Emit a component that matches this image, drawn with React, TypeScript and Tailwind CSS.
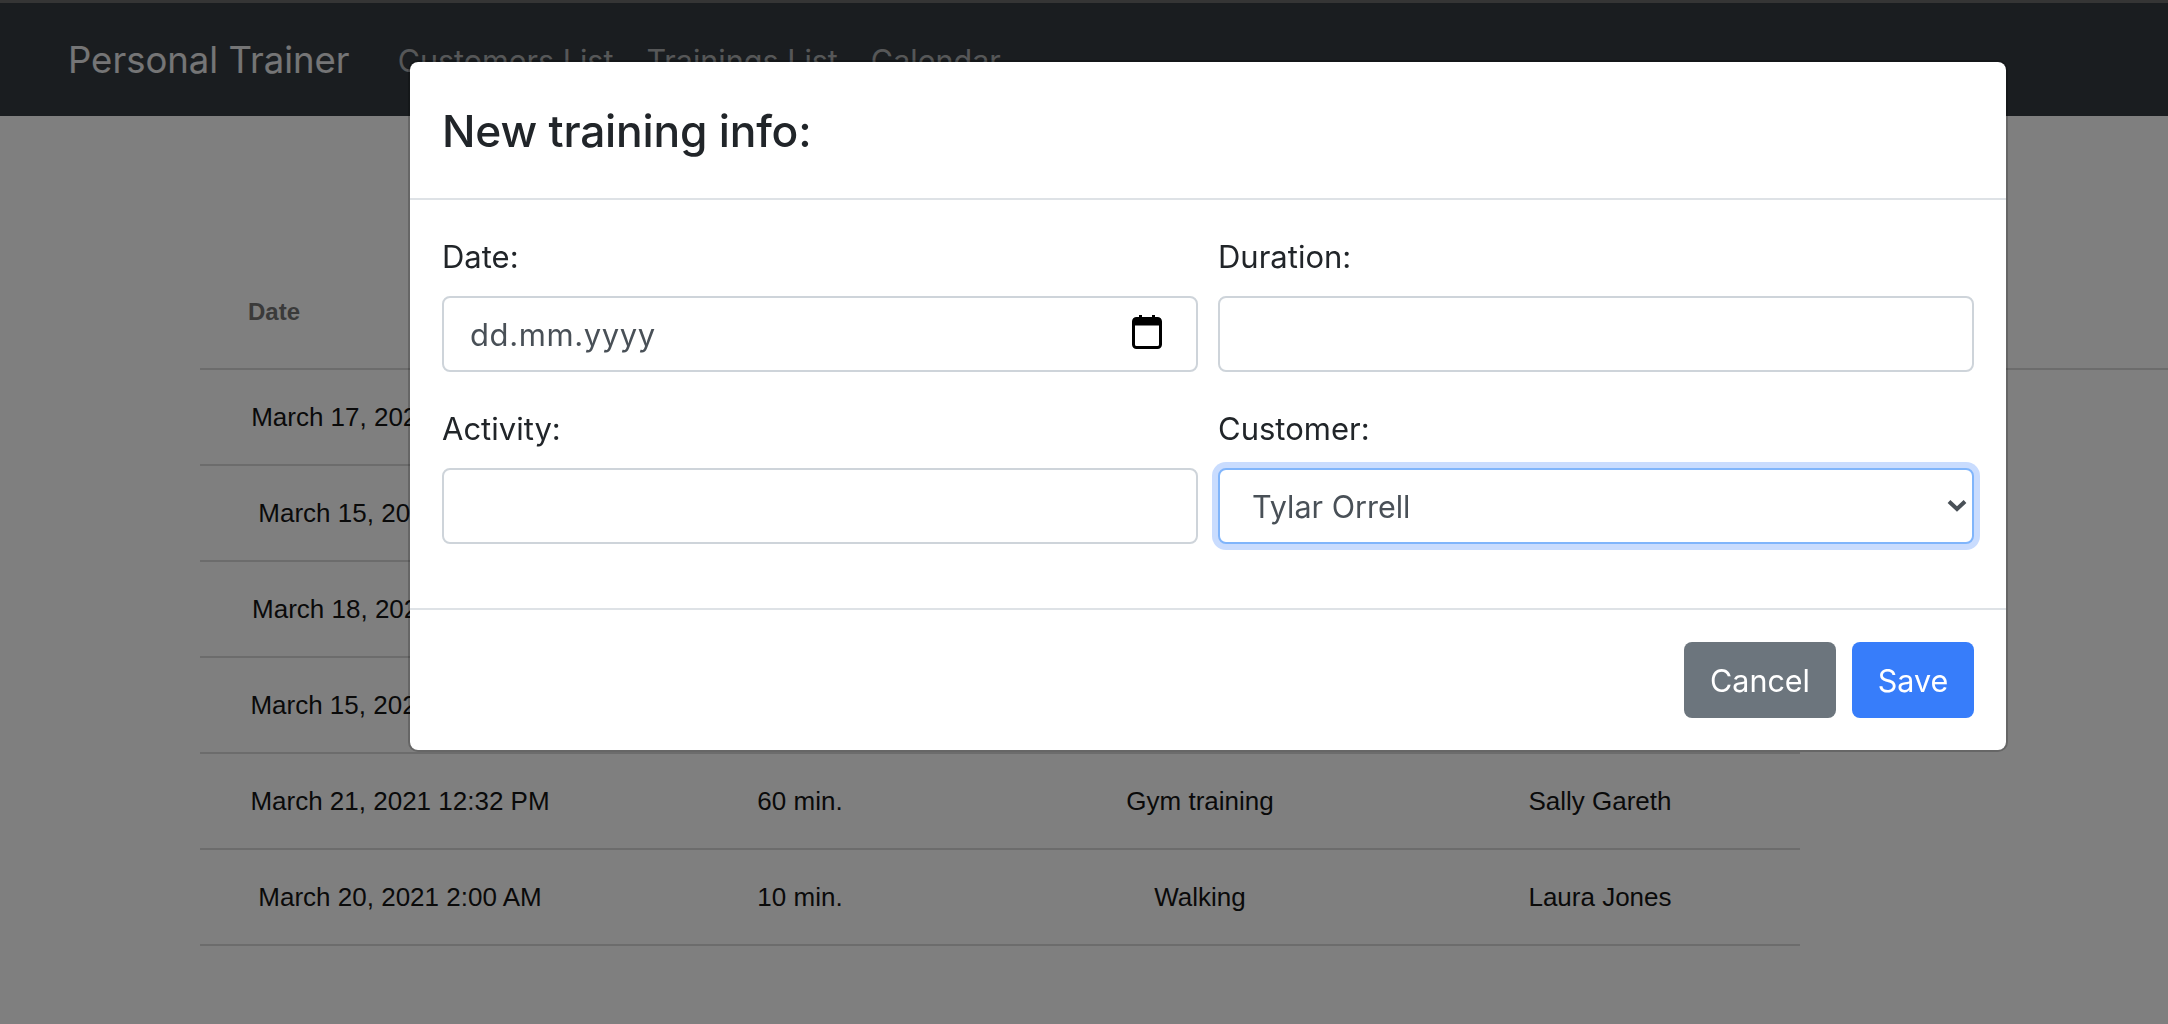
const trainings = [
  { date: "March 17, 2021 10:30 AM", duration: "60 min.", activity: "Spinning", customer: "Dan Smith" },
  { date: "March 15, 2021 9:00 AM", duration: "30 min.", activity: "Zumba", customer: "Mary Jones" },
  { date: "March 18, 2021 11:15 AM", duration: "45 min.", activity: "Fitness", customer: "Tylar Orrell" },
  { date: "March 15, 2021 12:45 PM", duration: "20 min.", activity: "Jogging", customer: "Anna Lee" },
  { date: "March 21, 2021 12:32 PM", duration: "60 min.", activity: "Gym training", customer: "Sally Gareth" },
  { date: "March 20, 2021 2:00 AM", duration: "10 min.", activity: "Walking", customer: "Laura Jones" },
];

const inputClass =
  "h-[76px] w-full rounded-lg border-2 border-[#ced4da] bg-white px-[26px] text-[31px] tracking-[0.6px] text-[#495057] outline-none placeholder:text-[#495057]";

function Field({ label, children }: { label: string; children: React.ReactNode }) {
  return (
    <label className="block">
      <span className="mb-[15px] block text-[31px] leading-[48px] text-[#212529]">{label}</span>
      {children}
    </label>
  );
}

function CalendarIcon() {
  return (
    <svg viewBox="0 0 30 34" className="h-[34px] w-[30px]" aria-hidden="true">
      <path d="M7 0h3v4H7zM20 0h3v4h-3z" fill="#000" />
      <rect x="1.5" y="3.5" width="27" height="29" rx="3" fill="none" stroke="#000" strokeWidth="3" />
      <rect x="1.5" y="3.5" width="27" height="7" fill="#000" />
    </svg>
  );
}

function TrainingsTable() {
  return (
    <main className="pt-[156px] pl-[200px] font-['Liberation_Sans',sans-serif] text-[26px] text-[#141414]">
      <div className="flex h-[98px] border-b-2 border-[#d9d9d9] pb-[16px] text-[24px] font-bold text-[#757575]">
        <div className="flex w-[400px] items-center pl-[48px]">Date</div>
        <div className="flex w-[400px] items-center pl-[48px]">Duration</div>
        <div className="flex w-[400px] items-center pl-[48px]">Activity</div>
        <div className="flex w-[400px] items-center pl-[48px]">Customer</div>
      </div>
      <div className="w-[1600px]">
        {trainings.map((t) => (
          <div key={t.date} className="grid h-[96px] grid-cols-4 items-center border-b-2 border-[#d9d9d9] text-center">
            <div>{t.date}</div>
            <div>{t.duration}</div>
            <div>{t.activity}</div>
            <div>{t.customer}</div>
          </div>
        ))}
      </div>
    </main>
  );
}

export default function App() {
  return (
    <div className="h-[1024px] overflow-hidden bg-white font-['Inter',sans-serif]">
      <nav className="flex h-[116px] items-center border-t-[3px] border-[#6b6b6b] bg-[#343a40] pt-[2px] pl-[68px]">
        <span className="mr-[48px] text-[36.5px] text-white/90">Personal Trainer</span>
        <div className="flex gap-[33px] text-[30.5px] text-white/60">
          <span>Customers List</span>
          <span>Trainings List</span>
          <span>Calendar</span>
        </div>
      </nav>
      <TrainingsTable />

      <div className="fixed inset-0 bg-black/50 pt-[60px] pl-[408px]">
        <div className="h-[692px] w-[1600px] rounded-[10px] border-2 border-black/20 bg-white bg-clip-padding">
          <header className="flex h-[138px] items-center border-b-2 border-[#dee2e6] pt-[2px] pl-[32px]">
            <h2 className="text-[44.3px] font-medium tracking-[-0.2px] text-[#212529]">New training info:</h2>
          </header>

          <div className="grid h-[408px] grid-cols-2 content-start gap-x-[20px] gap-y-[33px] px-[32px] pt-[33px]">
            <Field label="Date:">
              <div className="relative">
                <input className={inputClass} placeholder="dd.mm.yyyy" />
                <div className="absolute top-[19px] right-[36px]">
                  <CalendarIcon />
                </div>
              </div>
            </Field>
            <Field label="Duration:">
              <input className={inputClass} />
            </Field>
            <Field label="Activity:">
              <input className={inputClass} />
            </Field>
            <Field label="Customer:">
              <div className="relative">
                <select className="h-[76px] w-full appearance-none rounded-lg border-2 border-[#80b5fb] bg-white px-[32px] pt-[2px] text-[30.5px] text-[#495057] shadow-[0_0_0_6px_#c9dcfe] outline-none">
                  <option>Tylar Orrell</option>
                </select>
                <svg viewBox="0 0 20 13" className="pointer-events-none absolute top-[31px] right-[7px] h-[13px] w-[20px]" aria-hidden="true">
                  <path d="M2 2.5l8 7.5 8-7.5" fill="none" stroke="#495057" strokeWidth="4" />
                </svg>
              </div>
            </Field>
          </div>

          <footer className="flex h-[142px] items-start justify-end gap-[16px] border-t-2 border-[#dee2e6] pt-[32px] pr-[32px]">
            <button className="h-[76px] w-[152px] rounded-lg bg-[#6c757d] pt-[2px] text-[30.5px] text-white">Cancel</button>
            <button className="h-[76px] w-[122px] rounded-lg bg-[#377dfa] pt-[2px] text-[30.5px] text-white">Save</button>
          </footer>
        </div>
      </div>
    </div>
  );
}
